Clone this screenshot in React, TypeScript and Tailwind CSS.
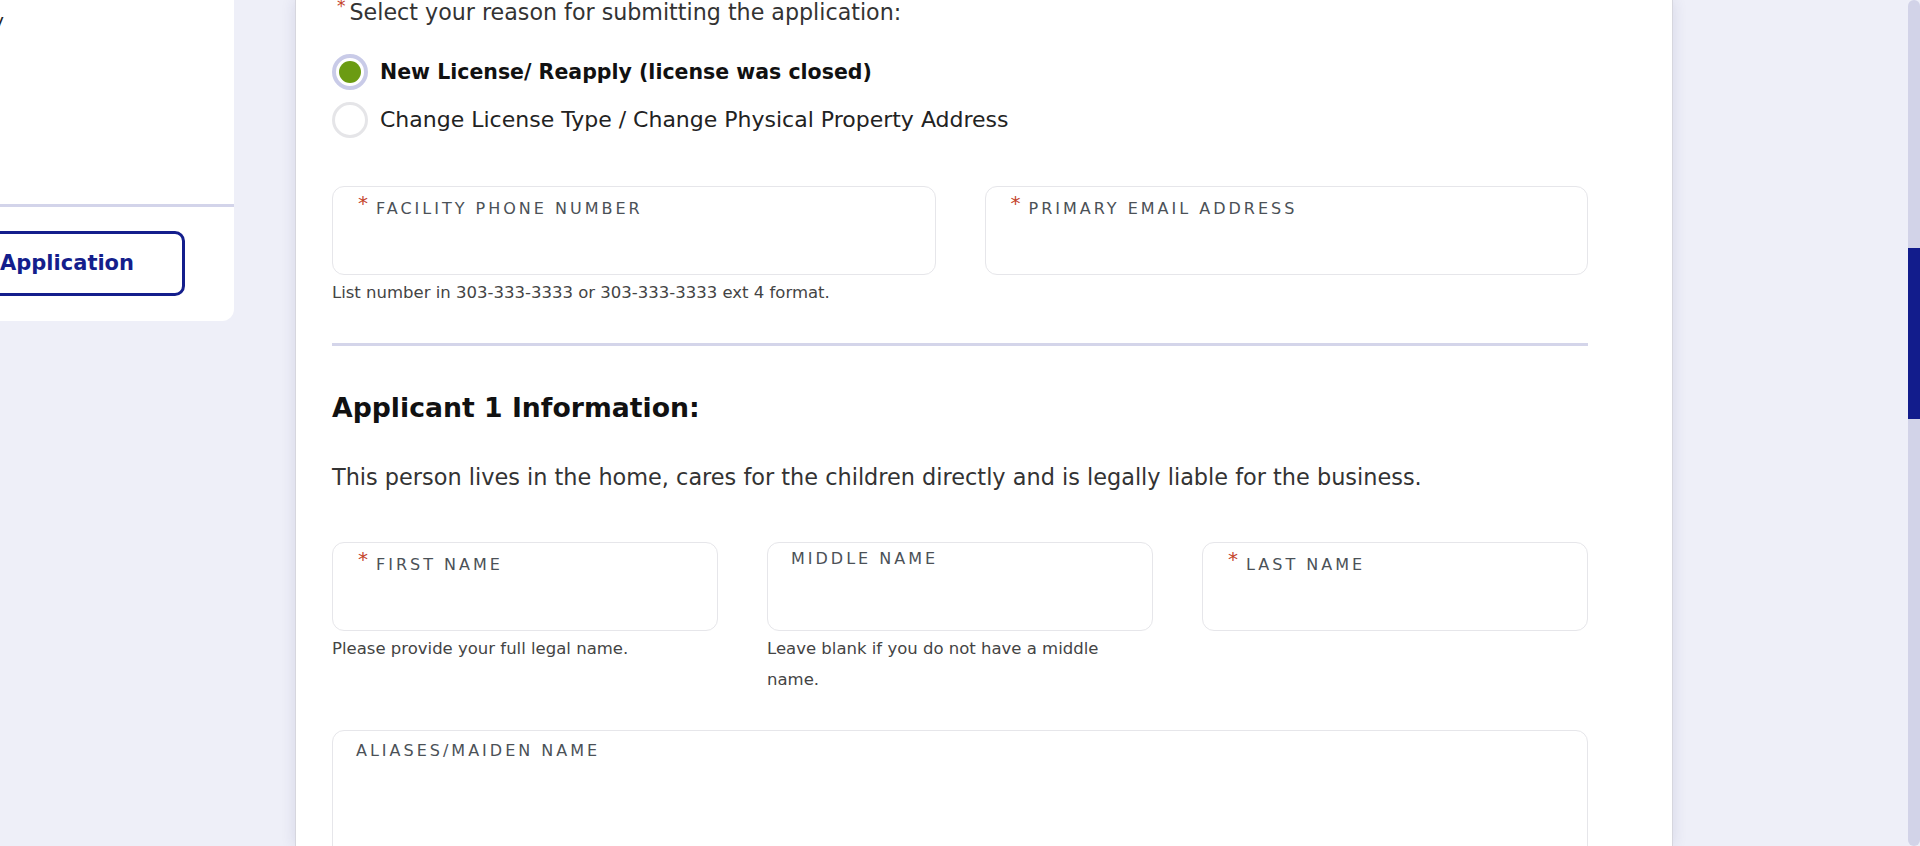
import React from 'react';

type FieldProps = {
  label: string;
  required?: boolean;
  help?: string;
};

function Field({ label, required, help }: FieldProps) {
  return (
    <div className="flex flex-col">
      <div className="h-[89px] rounded-[12px] border border-[#e6e6ea] bg-white">
        {required ? (
          <div className="flex items-start pl-[25px] pt-[6px]">
            <span className="text-[20px] leading-[20px] text-[#c4432b]">*</span>
            <span className="ml-[8px] mt-[6px] text-[16px] leading-[20px] tracking-[3px] text-[#4b5157]">
              {label}
            </span>
          </div>
        ) : (
          <div className="pl-[23px] pt-[6px] text-[16px] leading-[20px] tracking-[3px] text-[#4b5157]">
            {label}
          </div>
        )}
      </div>
      {help && (
        <p className="mt-[2px] text-[16.5px] leading-[31px] text-[#444]">{help}</p>
      )}
    </div>
  );
}

function Radio({ checked, label }: { checked?: boolean; label: string }) {
  return (
    <label className="flex h-[36px] items-center gap-[12px]">
      {checked ? (
        <span className="flex h-[36px] w-[36px] items-center justify-center rounded-full border-[4px] border-[#c9cbe8] bg-white">
          <span className="h-[22px] w-[22px] rounded-full bg-[#6b9b12]"></span>
        </span>
      ) : (
        <span className="h-[36px] w-[36px] rounded-full border-[3px] border-[#e5e5e8] bg-white"></span>
      )}
      <span
        className={
          checked
            ? 'text-[20.5px] font-bold leading-[26px] text-[#111]'
            : 'text-[22px] leading-[26px] text-[#222]'
        }
      >
        {label}
      </span>
    </label>
  );
}

export default function App() {
  return (
    <div className="flex h-[846px] w-full overflow-hidden bg-[#eeeff8] font-['DejaVu_Sans',sans-serif]">
      {/* left nav panel, scrolled partly out of view */}
      <aside className="flex h-[321px] w-[234px] shrink-0 flex-col overflow-hidden rounded-br-[12px] bg-white">
        <div className="flex justify-end pt-[9px] pr-[230px]">
          <span className="shrink-0 whitespace-nowrap text-[18.5px] leading-[24px] text-[#222]">Eligibility</span>
        </div>
        <div className="mt-[171px] h-[3px] bg-[#d3d4ea]"></div>
        <div className="mt-[24px] flex justify-end pr-[49px]">
          <button className="flex h-[65px] w-[240px] shrink-0 items-center justify-end rounded-[10px] border-[3px] border-[#141e8c] pr-[48px] text-[21px] font-bold text-[#141e8c]">
            Application
          </button>
        </div>
      </aside>

      {/* main form card */}
      <main className="ml-[61px] h-full w-[1378px] shrink-0 border-x border-[#d6d6de] bg-white pl-[36px] shadow-[0_0_14px_rgba(40,40,110,0.12)]">
        <div className="w-[1256px]">
          <div className="flex items-start">
            <span className="ml-[5px] -mt-[2px] text-[17px] leading-[16px] text-[#c4432b]">*</span>
            <span className="ml-[4px] text-[22.2px] leading-[24px] text-[#333]">
              Select your reason for submitting the application:
            </span>
          </div>

          <div className="mt-[30px] flex flex-col gap-[12px]">
            <Radio checked label="New License/ Reapply (license was closed)" />
            <Radio label="Change License Type / Change Physical Property Address" />
          </div>

          <div className="mt-[48px] grid grid-cols-2 gap-x-[49px]">
            <Field
              required
              label="FACILITY PHONE NUMBER"
              help="List number in 303-333-3333 or 303-333-3333 ext 4 format."
            />
            <Field required label="PRIMARY EMAIL ADDRESS" />
          </div>

          <div className="mt-[35px] h-[3px] bg-[#d4d5ea]"></div>

          <h2 className="mt-[46px] text-[26.7px] font-bold leading-[32px] text-[#111]">
            Applicant 1 Information:
          </h2>

          <p className="mt-[39px] text-[22.4px] leading-[28px] text-[#333]">
            This person lives in the home, cares for the children directly and is legally liable for the business.
          </p>

          <div className="mt-[51px] grid grid-cols-3 gap-x-[49px]">
            <Field required label="FIRST NAME" help="Please provide your full legal name." />
            <Field label="MIDDLE NAME" help="Leave blank if you do not have a middle name." />
            <Field required label="LAST NAME" />
          </div>

          <div className="mt-[35px] h-[160px] rounded-[12px] border border-[#e6e6ea] bg-white pl-[23px] pt-[10px]">
            <div className="text-[16px] leading-[20px] tracking-[3px] text-[#4b5157]">ALIASES/MAIDEN NAME</div>
          </div>
        </div>
      </main>

      <div className="flex-1"></div>

      {/* scrollbar */}
      <div className="flex h-full w-[12px] shrink-0 flex-col overflow-hidden rounded-[6px] bg-[#d2d3e8]">
        <div className="h-[248px] shrink-0"></div>
        <div className="h-[171px] shrink-0 bg-[#121c8c]"></div>
      </div>
    </div>
  );
}
